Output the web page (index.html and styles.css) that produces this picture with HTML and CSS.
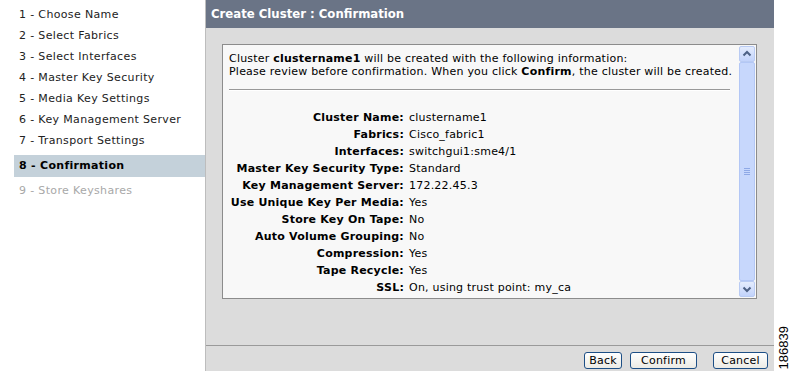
FILE: index.html
```html
<!DOCTYPE html>
<html>
<head>
<meta charset="utf-8">
<link rel="stylesheet" href="styles.css">
</head>
<body>
<div class="page">
  <nav class="steps">
    <div class="step">1 - Choose Name</div>
    <div class="step">2 - Select Fabrics</div>
    <div class="step">3 - Select Interfaces</div>
    <div class="step">4 - Master Key Security</div>
    <div class="step">5 - Media Key Settings</div>
    <div class="step">6 - Key Management Server</div>
    <div class="step">7 - Transport Settings</div>
    <div class="step current">8 - Confirmation</div>
    <div class="step disabled">9 - Store Keyshares</div>
  </nav>
  <main class="panel">
    <header class="title">Create Cluster : Confirmation</header>
    <section class="body">
      <div class="box">
        <div class="content">
          <p class="intro">Cluster <b>clustername1</b> will be created with the following information:<br>Please review before confirmation. When you click <b>Confirm</b>, the cluster will be created.</p>
          <div class="rule"></div>
          <div class="fields">
            <div class="k">Cluster Name:</div><div class="v">clustername1</div>
            <div class="k">Fabrics:</div><div class="v">Cisco_fabric1</div>
            <div class="k">Interfaces:</div><div class="v">switchgui1:sme4/1</div>
            <div class="k">Master Key Security Type:</div><div class="v">Standard</div>
            <div class="k">Key Management Server:</div><div class="v">172.22.45.3</div>
            <div class="k">Use Unique Key Per Media:</div><div class="v">Yes</div>
            <div class="k">Store Key On Tape:</div><div class="v">No</div>
            <div class="k">Auto Volume Grouping:</div><div class="v">No</div>
            <div class="k">Compression:</div><div class="v">Yes</div>
            <div class="k">Tape Recycle:</div><div class="v">Yes</div>
            <div class="k">SSL:</div><div class="v">On, using trust point: my_ca</div>
          </div>
        </div>
        <div class="scrollbar">
          <div class="sbtn"><svg width="14" height="14" viewBox="0 0 14 14"><path d="M3.5 8.5 L7 5 L10.5 8.5" fill="none" stroke="#4d6185" stroke-width="2"/></svg></div>
          <div class="thumb"><div class="grip"></div><div class="grip"></div><div class="grip"></div><div class="grip"></div></div>
          <div class="sbtn"><svg width="14" height="14" viewBox="0 0 14 14"><path d="M3.5 5.5 L7 9 L10.5 5.5" fill="none" stroke="#4d6185" stroke-width="2"/></svg></div>
        </div>
      </div>
    </section>
    <footer class="actions">
      <button class="btn">Back</button>
      <button class="btn wide">Confirm</button>
      <button class="btn cancel">Cancel</button>
    </footer>
  </main>
  <aside class="figid"><span>186839</span></aside>
</div>
</body>
</html>
```
FILE: styles.css
```css
html, body { margin: 0; padding: 0; background: #fff; }
body { font-family: "DejaVu Sans", Verdana, sans-serif; font-size: 11px; color: #000; letter-spacing: 0.22px; }
.page { display: flex; width: 792px; height: 371px; overflow: hidden; }

.steps { width: 205px; flex: none; padding-top: 4px; box-sizing: border-box; letter-spacing: 0.35px; }
.step { height: 21px; line-height: 21px; padding-left: 19px; color: #222; white-space: nowrap; }
.step.current { margin: 4px 0 3px 14px; padding-left: 5px; height: 22px; line-height: 22px; background: #c4d1da; font-weight: bold; color: #000; letter-spacing: 0.3px; }
.step.disabled { color: #a8a8a8; }

.panel { width: 569px; flex: none; display: flex; flex-direction: column; background: #dcdcdc; border-left: 1px solid #bdbdbd; box-sizing: border-box; }
.title { height: 28px; line-height: 27px; background: #6a7486; color: #fff; font-family: "DejaVu Sans Condensed", "DejaVu Sans", sans-serif; font-weight: bold; font-size: 13px; padding-left: 5px; letter-spacing: 0; }
.body { flex: 1; padding: 16px 16px 0 16px; }
.box { height: 255px; width: 535px; box-sizing: border-box; border: 1px solid #8c8c8c; background: #f8f8f8; display: flex; }
.content { flex: 1; padding: 7px 6px 0 6px; }
.intro { margin: 0; line-height: 13px; }
.rule { height: 0; border-top: 1px solid #999; border-bottom: 1px solid #fff; margin: 11px 3px 0 0; }
.fields { display: grid; grid-template-columns: 175px auto; column-gap: 5px; margin-top: 18px; line-height: 17px; }
.k { text-align: right; font-weight: bold; white-space: nowrap; }
.v { white-space: nowrap; }

.scrollbar { width: 16px; flex: none; margin: 1px 1px 1px 0; display: flex; flex-direction: column; }
.sbtn { height: 16px; box-sizing: border-box; border: 1px solid #b9cbf3; border-radius: 2px; background: linear-gradient(#e4ecfd, #c2d3fb); display: flex; align-items: center; justify-content: center; }
.thumb { flex: 1; box-sizing: border-box; border: 1px solid #b3c7f5; border-radius: 2px; background: #c7d7fc; display: flex; flex-direction: column; align-items: center; justify-content: center; gap: 1px; }
.grip { width: 6px; height: 1px; background: #8fa9e6; }

.actions { height: 26px; border-top: 1px solid #9a9a9a; display: flex; align-items: flex-start; justify-content: flex-end; padding: 6px 6px 0 0; box-sizing: border-box; gap: 8px; }
.btn { font-family: "DejaVu Sans", Verdana, sans-serif; font-size: 11px; letter-spacing: 0.2px; height: 17px; padding: 0; width: 38px; border: 1px solid #1d4f86; border-radius: 3px; background: linear-gradient(#ffffff, #ecebe5); color: #000; line-height: 15px; }
.btn.wide { width: 67px; }
.btn.cancel { width: 55px; margin-left: 8px; }

.figid { flex: 1; display: flex; align-items: flex-end; justify-content: center; padding-bottom: 2px; }
.figid span { writing-mode: vertical-rl; transform: rotate(180deg); font-family: "Liberation Sans", Arial, sans-serif; font-size: 13px; letter-spacing: 0; color: #000; }
```
